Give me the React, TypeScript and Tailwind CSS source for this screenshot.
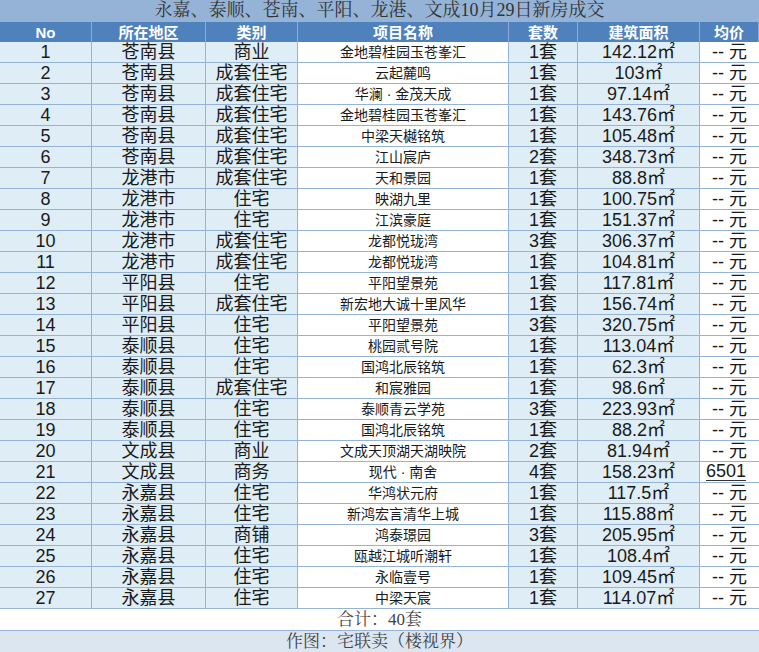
const rows: [string,string,string,string,string][] = [
["苍南县","商业","金地碧桂园玉苍峯汇","1套","142.12㎡"],
["苍南县","成套住宅","云起麓鸣","1套","103㎡"],
["苍南县","成套住宅","华澜 · 金茂天成","1套","97.14㎡"],
["苍南县","成套住宅","金地碧桂园玉苍峯汇","1套","143.76㎡"],
["苍南县","成套住宅","中梁天樾铭筑","1套","105.48㎡"],
["苍南县","成套住宅","江山宸庐","2套","348.73㎡"],
["龙港市","成套住宅","天和景园","1套","88.8㎡"],
["龙港市","住宅","映湖九里","1套","100.75㎡"],
["龙港市","住宅","江滨豪庭","1套","151.37㎡"],
["龙港市","成套住宅","龙都悦珑湾","3套","306.37㎡"],
["龙港市","成套住宅","龙都悦珑湾","1套","104.81㎡"],
["平阳县","住宅","平阳望景苑","1套","117.81㎡"],
["平阳县","成套住宅","新宏地大诚十里风华","1套","156.74㎡"],
["平阳县","住宅","平阳望景苑","3套","320.75㎡"],
["泰顺县","住宅","桃园贰号院","1套","113.04㎡"],
["泰顺县","住宅","国鸿北辰铭筑","1套","62.3㎡"],
["泰顺县","成套住宅","和宸雅园","1套","98.6㎡"],
["泰顺县","住宅","泰顺青云学苑","3套","223.93㎡"],
["泰顺县","住宅","国鸿北辰铭筑","1套","88.2㎡"],
["文成县","商业","文成天顶湖天湖映院","2套","81.94㎡"],
["文成县","商务","现代 · 南舍","4套","158.23㎡"],
["永嘉县","住宅","华鸿状元府","1套","117.5㎡"],
["永嘉县","住宅","新鸿宏言清华上城","1套","115.88㎡"],
["永嘉县","商铺","鸿泰璟园","3套","205.95㎡"],
["永嘉县","住宅","瓯越江城听潮轩","1套","108.4㎡"],
["永嘉县","住宅","永临壹号","1套","109.45㎡"],
["永嘉县","住宅","中梁天宸","1套","114.07㎡"],
];
const cols = "grid grid-cols-[92px_114px_92px_211px_69px_122px_59px]";
const sans = { fontFamily: '"Liberation Sans","Noto Sans CJK SC",sans-serif' };
const serif = { fontFamily: '"Liberation Serif","Noto Serif CJK SC","Noto Sans CJK SC",serif' };
export default function App() {
  return (
    <div className="w-[759px] h-[652px] bg-white overflow-hidden text-[#1a1a1a]" style={sans}>
      <div className="h-[22px] bg-[#95b3d7] flex items-center justify-center text-[18px] text-[#333] border-b border-[#95b3d7]" style={serif}>永嘉、泰顺、苍南、平阳、龙港、文成10月29日新房成交</div>
      <div className={`${cols} h-[20px] bg-[#4f81bd] text-white font-bold text-[15px]`}>
        {["No","所在地区","类别","项目名称","套数","建筑面积","均价"].map((h,i)=>(
          <div key={i} className="flex items-center justify-center border-r border-[#8eaadb] leading-none">{h}</div>
        ))}
      </div>
      {rows.map((r,i)=>{
        const special = i===20;
        return (
        <div key={i} className={`${cols} h-[21px] border-b border-[#95b3d7] text-[18px] leading-none`}>
          <div className="bg-[#dfeef6] flex items-center justify-center border-r border-[#95b3d7]">{i+1}</div>
          <div className="bg-[#dfeef6] flex items-center justify-center border-r border-[#95b3d7]">{r[0]}</div>
          <div className="bg-[#dfeef6] flex items-center justify-center border-r border-[#95b3d7]">{r[1]}</div>
          <div className="bg-white flex items-center justify-center border-r border-[#95b3d7] text-[14px]">{r[2]}</div>
          <div className="bg-[#dfeef6] flex items-center justify-center border-r border-[#95b3d7]">{r[3]}</div>
          <div className="bg-[#dfeef6] flex items-center justify-center border-r border-[#95b3d7]">{r[4]}</div>
          {special
            ? <div className="bg-white flex items-end justify-start pl-[6px] pb-[1px]"><span className="border-b border-[#333]">6501</span></div>
            : <div className="bg-white flex items-center justify-center">-- 元</div>}
        </div>);
      })}
      <div className="h-[22px] flex items-center justify-center text-[17px] text-[#444] border-b border-[#95b3d7]" style={serif}>合计：40套</div>
      <div className="h-[21px] bg-[#dce6f1] flex items-center justify-center text-[17px] text-[#444]" style={serif}>作图：宅联卖（楼视界）</div>
    </div>
  );
}
